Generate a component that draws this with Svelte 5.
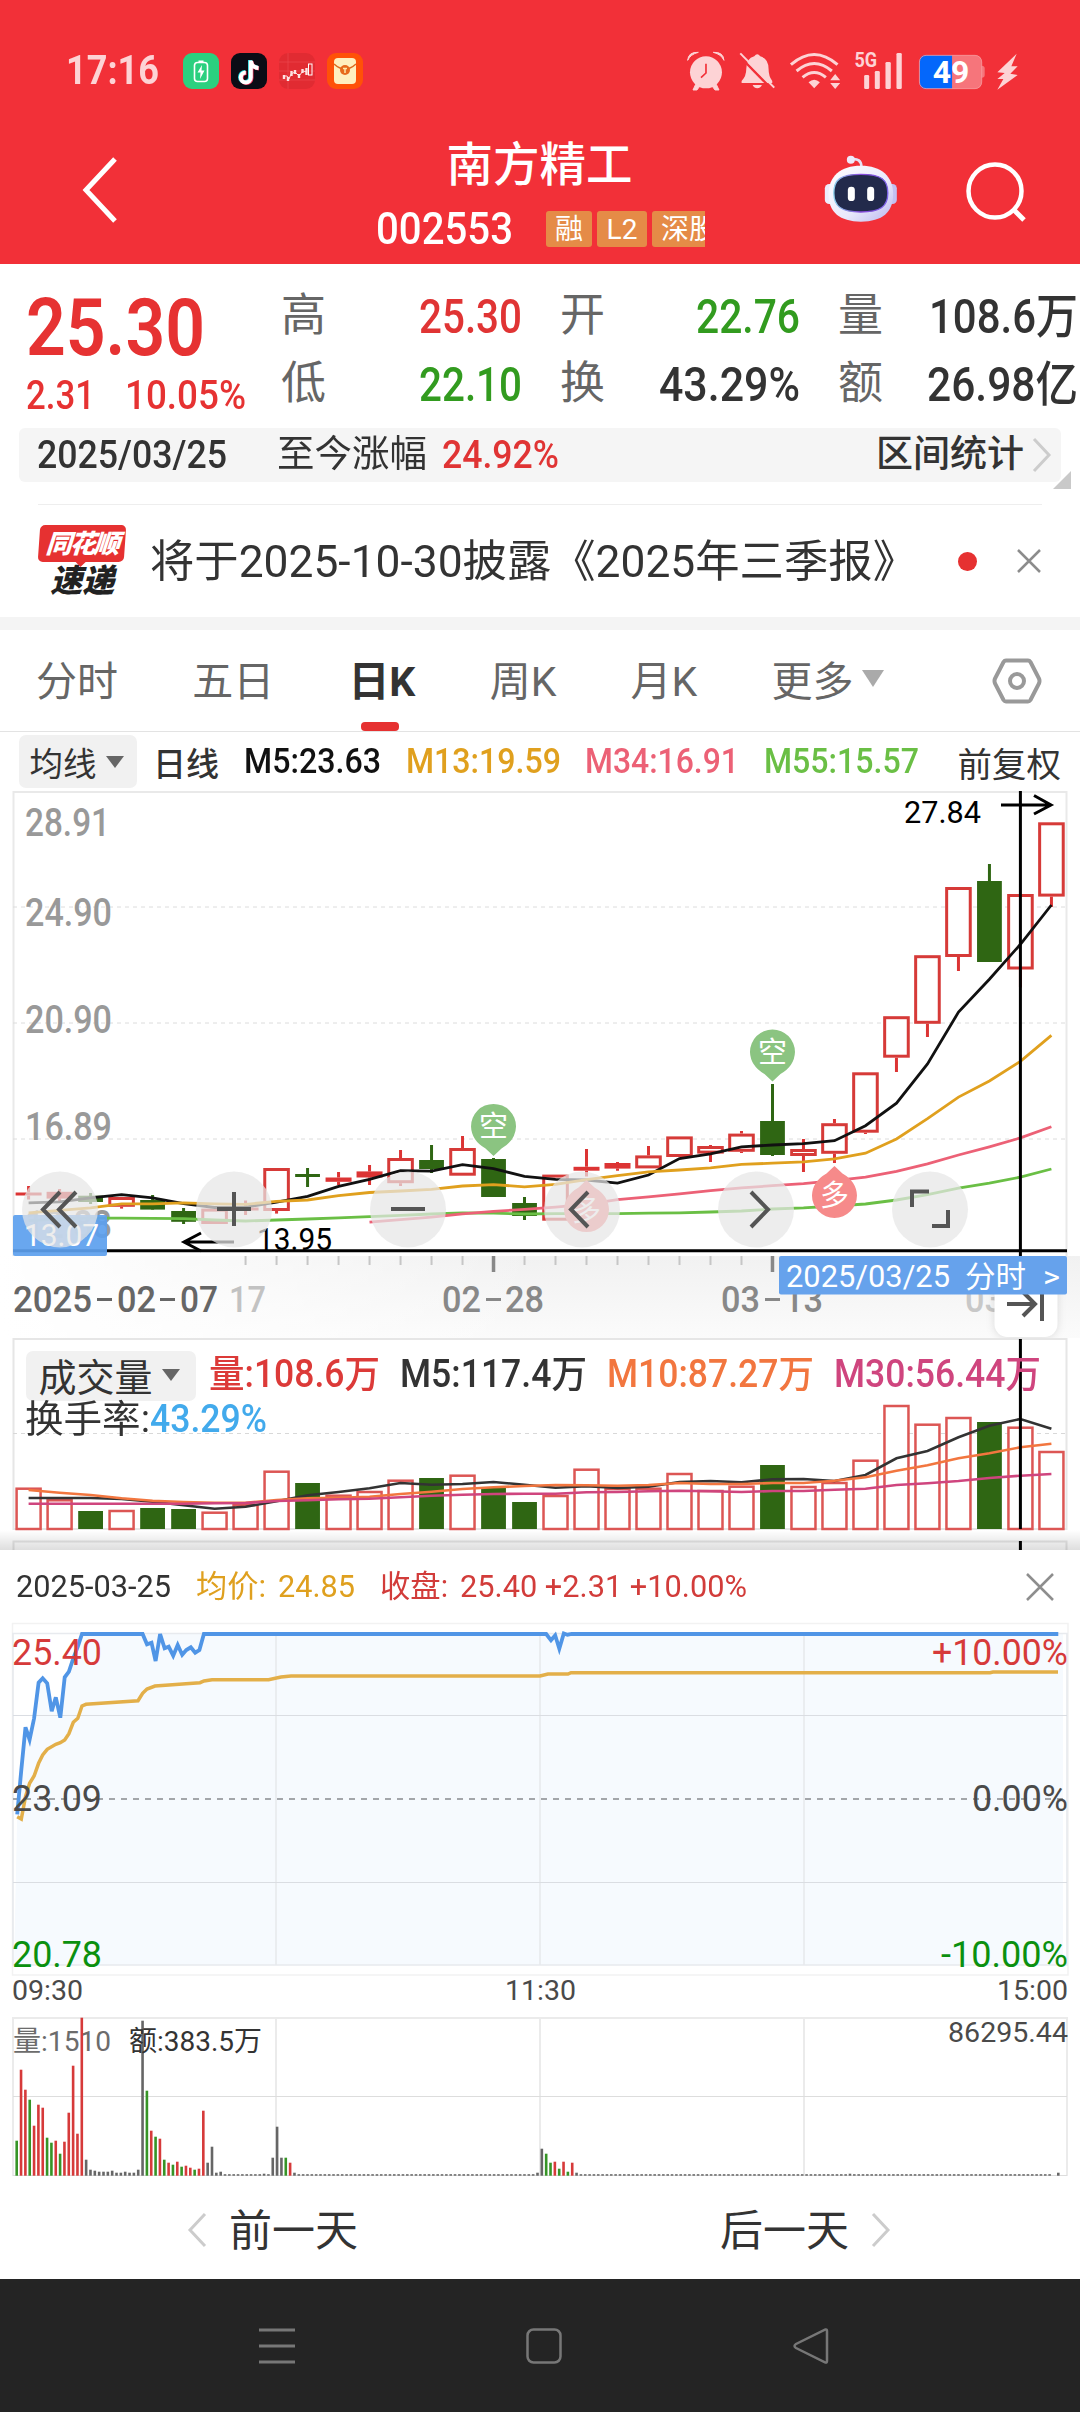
<script lang="ts">
	type Candle = [kind: 'up' | 'down', high: number, top: number, bottom: number, low: number];

	const tabs = ['分时', '五日', '日K', '周K', '月K', '更多'];
	let activeTab = $state('日K');

	const stats = [
		{ label: '高', value: '25.30', tone: 'rise', width: 103 },
		{ label: '开', value: '22.76', tone: 'fall', width: 104 },
		{ label: '量', value: '108.6万', tone: '', width: 149 },
		{ label: '低', value: '22.10', tone: 'fall', width: 103 },
		{ label: '换', value: '43.29%', tone: '', width: 141 },
		{ label: '额', value: '26.98亿', tone: '', width: 151 }
	];

	const averages = [
		{ text: 'M5:23.63', color: '#111', width: 137 },
		{ text: 'M13:19.59', color: '#e0a01e', width: 155 },
		{ text: 'M34:16.91', color: '#ec6176', width: 154 },
		{ text: 'M55:15.57', color: '#6abf45', width: 155 }
	];

	const volumeAverages = [
		{ text: '量:108.6万', color: '#dc3a38', width: 171 },
		{ text: 'M5:117.4万', color: '#333', width: 187 },
		{ text: 'M10:87.27万', color: '#f2763f', width: 207 },
		{ text: 'M30:56.44万', color: '#cf457e', width: 207 }
	];

	// y positions of each daily candle on the chart canvas
	const candles: Candle[] = [
		['up', 1186, 1192.5, 1195.5, 1199.6],
		['up', 1189, 1191.8, 1198.6, 1201.4],
		['down', 1193, 1195.7, 1202, 1204],
		['up', 1197, 1197, 1206.8, 1208.6],
		['down', 1195, 1200, 1209.6, 1209.6],
		['down', 1208, 1211, 1221.8, 1224],
		['up', 1208.6, 1208.6, 1224, 1224],
		['up', 1200.4, 1207.5, 1210.5, 1215],
		['up', 1168, 1168, 1211, 1213.6],
		['down', 1168, 1174, 1177, 1187],
		['up', 1172, 1177.5, 1181.8, 1185],
		['up', 1165, 1171.4, 1177.5, 1185],
		['up', 1150, 1158, 1183.2, 1186],
		['down', 1145, 1160, 1169, 1173],
		['up', 1136, 1148, 1175.7, 1175.7],
		['down', 1158, 1159, 1197, 1197],
		['down', 1197, 1203, 1216, 1220],
		['up', 1174.6, 1174.6, 1220.7, 1220.7],
		['up', 1149, 1166.8, 1170.7, 1176.4],
		['up', 1162, 1163, 1168.6, 1170.7],
		['up', 1146, 1155.4, 1168.4, 1168.4],
		['up', 1136.4, 1136.4, 1157, 1157],
		['up', 1145, 1146, 1153.6, 1162],
		['up', 1131, 1133.6, 1151.8, 1153],
		['down', 1084, 1121, 1155, 1156],
		['up', 1139, 1149, 1156, 1172],
		['up', 1119, 1123.2, 1153.8, 1163],
		['up', 1072.3, 1072.3, 1132.7, 1134],
		['up', 1016.2, 1016.2, 1057.7, 1072],
		['up', 955.2, 955.2, 1023.8, 1037],
		['up', 887, 887, 957, 971],
		['down', 864, 881, 962, 962],
		['up', 894, 894, 969.5, 987.5],
		['up', 822.3, 822.3, 896.6, 907]
	];

	const priceLines = [
		{ color: '#6abf45', start: 0, ys: [1220.7, 1219, 1218.2, 1218.2, 1218.4, 1218.6, 1220, 1221, 1220, 1219, 1217.9, 1216.6, 1215.4, 1214, 1213, 1213.2, 1214, 1213.6, 1213.6, 1213.6, 1213.2, 1212.9, 1212, 1211, 1209, 1207.9, 1206, 1204, 1200, 1194.6, 1188.2, 1183.2, 1177.1, 1169] },
		{ color: '#ec6176', start: 11, ys: [1222.1, 1219.6, 1217.1, 1213.9, 1211.4, 1209.3, 1207.1, 1204.3, 1199.6, 1196.8, 1193.9, 1190.7, 1187.9, 1185.7, 1183.6, 1180.7, 1177.1, 1171.4, 1163.9, 1155, 1146.8, 1137.9, 1126.8] },
		{ color: '#111', start: 0, ys: [1202.9, 1201.8, 1197.9, 1194.6, 1197.9, 1203.6, 1207.5, 1207.1, 1202.1, 1196.4, 1186.4, 1179.3, 1170.7, 1171.1, 1164.6, 1168.6, 1176.4, 1179.3, 1180, 1183.2, 1175, 1158.6, 1153.9, 1146.8, 1145, 1143.6, 1140.7, 1125.7, 1103.2, 1063.9, 1012.1, 979.3, 944.3, 905] },
		{ color: '#e0a01e', start: 0, ys: [1212.9, 1210.4, 1207.9, 1203.9, 1203.9, 1202.9, 1203.9, 1204.3, 1201.4, 1200, 1195.7, 1192.5, 1191, 1189.3, 1186, 1184.6, 1186.8, 1184.3, 1179.6, 1175.7, 1171.8, 1170, 1167.9, 1164.3, 1163.2, 1161.8, 1158.9, 1153.2, 1138.9, 1118.6, 1097.1, 1081, 1061.4, 1035.4] }
	];

	const volumeTops = [
		1487.7, 1499.3, 1511, 1510, 1508, 1509, 1511.7, 1504, 1470.7, 1483, 1494.7, 1491, 1479.7, 1478,
		1474.7, 1487, 1502, 1495, 1468.7, 1488, 1487.7, 1473, 1490, 1485.7, 1465, 1486, 1482, 1459.7,
		1405, 1423.7, 1417, 1422, 1426.7, 1451
	];

	const volumeLines = [
		{ color: '#333', ys: [1498, 1498, 1498, 1499, 1501.7, 1505.3, 1508.7, 1506.7, 1501.3, 1495.3, 1492, 1488.3, 1483, 1484.7, 1484, 1482, 1484.7, 1487.7, 1486.3, 1488, 1486.7, 1482, 1481, 1482.3, 1479.3, 1479, 1481, 1475, 1458.3, 1451, 1437.3, 1425.7, 1419, 1428.7] },
		{ color: '#f2763f', ys: [1490, 1492.7, 1495, 1498.3, 1500.7, 1502, 1502.7, 1502.7, 1500, 1498.3, 1497.7, 1496.7, 1494, 1491.7, 1489, 1487.3, 1486, 1485, 1485.3, 1485.7, 1485, 1483, 1484, 1484, 1483, 1483, 1480.7, 1477.3, 1470.7, 1465.3, 1458.3, 1453.3, 1447.3, 1443.7] },
		{ color: '#cf457e', ys: [1503.7, 1503.7, 1503.7, 1503.7, 1503.7, 1503.7, 1503.3, 1503, 1501, 1500.3, 1499.3, 1498.7, 1497.3, 1495.7, 1494.7, 1494, 1493.7, 1493.7, 1492.3, 1492, 1491.3, 1490.7, 1491.3, 1492, 1491, 1491, 1489.7, 1488.7, 1485, 1483.3, 1481, 1478, 1475.7, 1474] }
	];

	const pins = [
		{ index: 15, y: 1126.4, text: '空', up: false },
		{ index: 24, y: 1052, text: '空', up: false },
		{ index: 18, y: 1209.6, text: '多', up: true },
		{ index: 26, y: 1195.4, text: '多', up: true }
	];

	const priceLabels = [
		{ text: '28.91', y: 836, width: 83 },
		{ text: '24.90', y: 925.7, width: 85 },
		{ text: '20.90', y: 1033, width: 85 },
		{ text: '16.89', y: 1140, width: 85 },
		{ text: '12.88', y: 1238, width: 85 }
	];

	const controls = [
		'M60 1192L43 1209.5L60 1227M76 1192L59 1209.5L76 1227',
		'M234 1192V1226M217 1209H251',
		'M391 1209H425',
		'M588 1192L571 1209.5L588 1227',
		'M751 1192L768 1209.5L751 1227',
		'M912 1207V1191.5H929M932 1226H948V1210'
	];

	const intradayPrice =
		'17.2,1814.3 21.3,1770 25.5,1727.3 29.6,1739.7 34.1,1718.3 38.6,1682.7 42.7,1678.3 47.2,1683.3 51.7,1711.3 55.8,1697.3 60.3,1717.7 64.7,1677.3 68.9,1671.7 73.3,1658.3 77.8,1646.7 82,1634 142.6,1634 147,1644.3 151.5,1642.7 155.6,1661 160.1,1634 164.6,1648.3 168.7,1646.7 173.2,1655.7 177.7,1645 182.2,1654.7 186.3,1650 190.8,1647.3 195.2,1652.7 199.4,1650 203.9,1634 546.2,1634 551,1640.3 555.2,1635.3 559.3,1648.7 563.8,1633.5 567.5,1634.7 571.7,1634 1058.3,1634';
	const intradayAverage =
		'17.2,1816.7 21.3,1819 25.5,1796.7 29.6,1783.3 34.1,1776 38.6,1763.3 42.7,1755 47.2,1749.3 55.8,1744.3 60.3,1742.7 64.7,1740 68.9,1733.7 73.3,1722.3 77.8,1718.3 82,1706 86,1704.3 138,1700.7 142.6,1693.3 147,1689 155,1686 169,1685 186,1683.7 200,1682.7 204,1681 212,1679.7 268.6,1679.7 281,1677 291,1676 540,1676 548,1674 568,1674 571,1672.7 990,1672.7 993,1672 1058,1672';

	// per-minute volume, "minute + colour + height"; minutes left out are nearly flat
	const spikes =
		'0g35 1r106 2r86 3g76 4r50 5r71 6r68 7g38 8g33 9r35 10g22 11r34 12r63 13r110 14r42 15r158 16k16 17k6 18k5 19k4 20k4 21k4 22k5 23k3 24k3 25k4 26k3 27k3 28k6 29k155 30g85 31r45 32g39 33r37 34g16 35r13 36g11 37r14 38g9 39r10 40r8 41g6 42r7 43r65 44k13 45k29 46k3 47k4 57k2 59k18 60k49 61k18 62g18 63r13 64k3 120k3 121k27 122g22 123g13 124r14 125g7 126r14 127g4 128r13 129k3 192k2 239k0 240k3';
	const minuteColors: Record<string, string> = { r: '#d63a3a', g: '#369426', k: '#666' };
	const minutes = Array.from({ length: 241 }, () => ({ color: '#666', height: 1.5 }));
	for (const spike of spikes.split(' ')) {
		const [, minute, color, height] = spike.match(/(\d+)([rgk])(\d+)/) as RegExpMatchArray;
		minutes[+minute] = { color: minuteColors[color], height: +height };
	}

	const candleX = (index: number) => 28.6 + index * 30.995;

	const toPoints = (ys: number[], start = 0) =>
		ys.map((y, index) => `${candleX(index + start).toFixed(1)},${y}`).join(' ');

	// condense a label horizontally to the given width, like the narrow numeral face
	const fit = (node: HTMLElement, width: number) => {
		const natural = node.getBoundingClientRect().width;
		node.style.transform = `scaleX(${width / natural})`;
		node.style.marginRight = `${width - natural}px`;
	};
</script>

{#snippet label(text: string, x: number, y: number, width: number, size: number, color: string)}
	<text {x} {y} textLength={width} lengthAdjust="spacingAndGlyphs" font-size={size} fill={color}>{text}</text>
{/snippet}

<main>
	<header>
		<div class="status-bar">
			<span class="time" use:fit={93}>17:16</span>
			<div class="app-icons">
				<svg viewBox="0 0 36 36">
					<rect width="36" height="36" rx="9" fill="#2bd07f" />
					<rect x="11.5" y="9.5" width="13" height="19" rx="3" fill="none" stroke="#fff" stroke-width="1.6" />
					<path d="M15.500 7.500H20.500V9.500H15.500Z M19 12L14.500 19.500H17.500L17 26L21.500 17.500H18.500Z" fill="#fff" />
				</svg>
				<svg viewBox="0 0 36 36">
					<rect width="36" height="36" rx="9" fill="#0b0c15" />
					<g fill="none" stroke-width="4">
						<path d="M19 7V24A5 5 0 1 1 14 19M19 8Q20 14 26.500 14.500" stroke="#25d9e0" />
						<path d="M20.500 8V25A5 5 0 1 1 15.500 20M20.500 9Q21.500 15 28 15.500" stroke="#f0365e" />
						<path d="M19.800 7.500V24.500A5 5 0 1 1 14.800 19.500M19.800 8Q20.800 14.500 27.500 15" stroke="#fff" />
					</g>
				</svg>
				<svg viewBox="0 0 36 36">
					<rect width="36" height="36" rx="9" fill="#e12b32" />
					<path d="M0 9H36M0 18H36M0 27H36M9 0V36" stroke="#ed4b50" stroke-width=".6" />
					<path d="M5 22V26M9 24V28M12.500 18V23M16 17V21M20 21V25M23.500 16V20M27.500 15V22" fill="none" stroke="#fde2e2" stroke-width="2.400" />
					<path d="M4 23H8L10 26L12 21L16 19L20 23L24 18L28 19" fill="none" stroke="#fde2e2" />
					<rect x="29.500" y="11" width="3.500" height="11" fill="none" stroke="#fff" />
				</svg>
				<svg viewBox="0 0 36 36">
					<rect width="36" height="36" rx="9" fill="#ff5108" />
					<rect x="7" y="5" width="22" height="26" rx="4" fill="#ffefbf" />
					<path d="M7 11Q18 21 29 11" fill="none" stroke="#dd691e" stroke-width="1.500" />
					<circle cx="18" cy="17" r="5" fill="#e76a1c" />
					<path d="M16 15.500H20M18 15.500V20" stroke="#ffe7a8" stroke-width="1.500" />
				</svg>
			</div>
			<svg class="indicators" viewBox="50 60 1000 120" fill="#fdd3d5">
				<circle cx="107" cy="124" r="48" />
				<path d="M52 88Q54 62 84 64Q60 70 52 88ZM161 88Q159 62 129 64Q153 70 161 88ZM76 160L68 177H80L88 166ZM138 160L146 177H134L126 166Z" stroke="#fdd3d5" stroke-width="3" />
				<path d="M107 98V126L92 140" fill="none" stroke="#f23038" stroke-width="5" />
				<path d="M214 156V150Q228 136 228 114Q228 82 252 76Q261 64 270 76Q295 82 295 114Q295 136 306 150V156ZM247 162H275Q270 172 261 172Q252 172 247 162Z" />
				<path d="M204 72L306 176" stroke="#f23038" stroke-width="7" />
				<path d="M210 67L312 170" stroke="#fdd3d5" stroke-width="6" />
				<path d="M362 101Q432 40 502 101M379 120Q432 75 485 120M397 139Q432 110 467 139" fill="none" stroke="#fdd3d5" stroke-width="9" />
				<path d="M415 154Q432 138 449 154L432 172ZM480 148L495 129L510 148ZM480 156L495 174L510 156Z" />
				<rect x="582" y="132" width="15" height="42" rx="4" />
				<rect x="614" y="120" width="15" height="54" rx="4" />
				<rect x="646" y="93" width="16" height="81" rx="4" />
				<rect x="679" y="66" width="16" height="108" rx="4" />
				<text class="network" x="553" y="109" textLength="68" lengthAdjust="spacingAndGlyphs">5G</text>
				<path d="M845 73H915Q935 73 935 94V104Q944 104 944 112V132Q944 140 935 140V152Q935 173 915 173H845Z" fill="#f6757b" />
				<path d="M846 72H768Q748 72 748 94V152Q748 174 768 174H846Z" fill="#0467fb" />
				<rect x="748" y="73" width="187" height="100" rx="20" fill="none" stroke="#f79a9d" stroke-width="2.500" />
				<text class="battery" x="788" y="156" textLength="110" lengthAdjust="spacingAndGlyphs">49</text>
				<path d="M1040 68L982 124L1004 126L982 144H1000L982 176L1043 132L1021 128L1043 106H1024Z" />
			</svg>
		</div>

		<div class="app-bar">
			<svg class="back" viewBox="0 0 36 66"><path d="M33 2L4 33L33 64" fill="none" stroke="#fff" stroke-width="5" /></svg>
			<div class="stock">
				<h1>南方精工</h1>
				<div class="code-row">
					<span class="code" use:fit={137}>002553</span>
					<div class="tags">
						<span class="tag">融</span>
						<span class="tag wide">L2</span>
						<span class="tag cut">深股通</span>
					</div>
				</div>
			</div>
			<svg class="robot" viewBox="460 370 230 210">
				<defs>
					<linearGradient id="shell" x1="0" x2="1" y2="1">
						<stop offset="0" stop-color="#fff" />
						<stop offset=".6" stop-color="#e9e8fb" />
						<stop offset="1" stop-color="#b9b6ee" />
					</linearGradient>
					<linearGradient id="rim" x1="0" x2="1">
						<stop offset="0" stop-color="#8fd3ee" />
						<stop offset=".5" stop-color="#8748d8" />
						<stop offset="1" stop-color="#7b62e8" />
					</linearGradient>
				</defs>
				<path d="M544 389Q574 384 575 412" fill="none" stroke="#e6e0f5" stroke-width="8" />
				<circle cx="543" cy="390" r="12" fill="#eee9fa" />
				<rect x="465" y="463" width="30" height="60" rx="13" fill="#edecfc" />
				<rect x="651" y="463" width="30" height="60" rx="13" fill="#c3c0f2" />
				<path d="M573 408C635 408 670 440 670 494C670 548 638 576 573 576C510 576 476 548 476 494C476 440 512 408 573 408Z" fill="url(#shell)" />
				<path d="M573 434C635 434 654 450 654 490C654 530 632 547 573 547C514 547 492 530 492 490C492 450 512 434 573 434Z" fill="#222a4b" stroke="url(#rim)" stroke-width="4" />
				<rect x="534" y="471" width="21" height="43" rx="10" fill="#fff" />
				<rect x="592" y="471" width="21" height="43" rx="10" fill="#fff" />
			</svg>
			<svg class="search" viewBox="0 0 62 62">
				<circle cx="30" cy="29" r="26.500" fill="none" stroke="#fff" stroke-width="4.500" />
				<path d="M49 48L59 58" stroke="#fff" stroke-width="5" />
			</svg>
		</div>
	</header>

	<section class="quote">
		<div class="last">
			<strong class="price" use:fit={179}>25.30</strong>
			<div class="change">
				<span use:fit={69}>2.31</span>
				<span use:fit={121}>10.05%</span>
			</div>
		</div>
		<div class="stats">
			{#each stats as stat (stat.label)}
				<div class="stat">
					<span class="stat-label">{stat.label}</span>
					<span class={`stat-value ${stat.tone}`} use:fit={stat.width}>{stat.value}</span>
				</div>
			{/each}
		</div>
	</section>

	<section class="range">
		<span class="range-date" use:fit={190}>2025/03/25</span>
		<span class="range-name" use:fit={150}>至今涨幅</span>
		<span class="range-change" use:fit={117}>24.92%</span>
		<span class="range-link">区间统计</span>
		<svg class="chevron" viewBox="0 0 20 36"><path d="M2 2L17 18L2 34" fill="none" stroke="#ccc" stroke-width="3" /></svg>
		<i class="corner"></i>
	</section>

	<section class="news">
		<div class="news-logo">
			<span class="bubble">同花顺</span>
			<span class="express">速递</span>
		</div>
		<p><span use:fit={767}>将于2025-10-30披露《2025年三季报》</span></p>
		<i class="dot"></i>
		<svg class="close" viewBox="0 0 26 26"><path d="M2 2L24 24M24 2L2 24" stroke="#8c8c8c" stroke-width="2.500" /></svg>
	</section>

	<nav class="tabs">
		{#each tabs as tab (tab)}
			<button class:active={tab === activeTab} onclick={() => (activeTab = tab)}>
				{tab}{#if tab === '更多'}<i class="triangle"></i>{/if}
			</button>
		{/each}
		<svg class="settings" viewBox="0 0 50 46" fill="none" stroke="#999" stroke-width="4">
			<path d="M14 2.500H36Q37.500 2.500 38.500 4L47 20.500Q48 23 47 25.500L38.500 42Q37.500 43.500 36 43.500H14Q12.500 43.500 11.500 42L3 25.500Q2 23 3 20.500L11.500 4Q12.500 2.500 14 2.500Z" />
			<circle cx="25" cy="23" r="7" />
		</svg>
	</nav>

	<section class="averages">
		<button class="chip">均线<i class="triangle small"></i></button>
		<span class="period">日线</span>
		<div class="average-list">
			{#each averages as average (average.text)}
				<span style:color={average.color} use:fit={average.width}>{average.text}</span>
			{/each}
		</div>
		<span class="adjust">前复权</span>
	</section>

	<svg class="k-chart" viewBox="0 788 1080 550">
		<defs>
			<linearGradient id="axis" x1="0" x2="0" y1="0" y2="1">
				<stop offset="0" stop-color="#f1f1f1" />
				<stop offset="1" stop-color="#fbfbfb" />
			</linearGradient>
			<linearGradient id="axis-fade">
				<stop offset="0" stop-color="#fff" />
				<stop offset=".5" stop-color="#fff" stop-opacity="0" />
			</linearGradient>
		</defs>
		<rect x="0" y="1256" width="1080" height="82" fill="url(#axis)" />
		<rect x="0" y="1256" width="1080" height="82" fill="url(#axis-fade)" />
		<path d="M13.500 1256V792H1066.500V1256" fill="none" stroke="#e9e9e9" stroke-width="2" />
		<path d="M13 907H1067M13 1023H1067M13 1139H1067" stroke="#dcdcdc" stroke-dasharray="4 4" />
		<g class="prices">
			{#each priceLabels as item (item.text)}
				{@render label(item.text, 25, item.y, item.width + 2, 38, '#999')}
			{/each}
		</g>

		{#each candles as [kind, high, top, bottom, low], index (index)}
			{@const x = candleX(index)}
			{#if kind === 'down'}
				<path d={`M${x} ${high}V${low}`} stroke="#2f6613" stroke-width="3" />
				<rect x={x - 12.4} y={top} width="24.8" height={bottom - top} fill="#2f6613" />
			{:else}
				<path d={`M${x} ${high}V${top}M${x} ${bottom}V${low}`} stroke="#dc3434" stroke-width="3" />
				{#if bottom - top < 7}
					<rect x={x - 13} y={top} width="26" height={bottom - top} fill="#dc3434" />
				{:else}
					<rect x={x - 11.8} y={top + 1.5} width="23.600" height={bottom - top - 3} fill="#fff" stroke="#d63a38" stroke-width="3" />
				{/if}
			{/if}
		{/each}
		{#each priceLines as line (line.color)}
			<polyline points={toPoints(line.ys, line.start)} fill="none" stroke={line.color} stroke-width="2.800" />
		{/each}

		{#each pins as pin (pin.index)}
			<g transform={`translate(${candleX(pin.index)} ${pin.y})`}>
				<path
					d="M-22.500 0A22.500 22.500 0 1 1 22.500 0Q22 14 8 22L0 29.500L-8 22Q-22 14 -22.500 0Z"
					transform={pin.up ? 'scale(1 -1)' : undefined}
					fill={pin.up ? '#f68a8a' : '#8bc481'}
				/>
				<text class="pin" x="0" y="11">{pin.text}</text>
			</g>
		{/each}

		{@render label('27.84', 904, 823, 77, 30.5, '#000')}
		<path d="M1001 805H1051M1034 795.500L1051 805L1034 814" fill="none" stroke="#000" stroke-width="3" />
		{@render label('13.95', 257, 1250, 75, 30.5, '#000')}
		<path d="M234 1242H184M201 1233L184 1242L201 1251" fill="none" stroke="#000" stroke-width="3" />
		<path d="M13 1250.700H1067M1020.400 791V1256" stroke="#000" stroke-width="3" />
		<rect x="13" y="1215" width="94" height="41" rx="2" fill="#5c9fee" fill-opacity=".92" />
		{@render label('13.07', 24, 1246, 75, 30.5, '#fff')}

		{#each candles.slice(7) as _, offset (offset)}
			{@const major = offset === 8 || offset === 17}
			<path
				d={`M${candleX(offset + 7)} 1256V${major ? 1272 : 1265}`}
				stroke={major ? '#888' : '#c6c6c6'}
				stroke-width={major ? 3.5 : 2}
			/>
		{/each}
		<g class="dates">
			{@render label('2025', 13, 1312, 79, 37, '#666')}
			{@render label('02', 117, 1312, 39, 37, '#666')}
			{@render label('07', 180, 1312, 38, 37, '#666')}
			{@render label('17', 229, 1312, 37, 37, '#c2c2c2')}
			{@render label('02', 442, 1312, 39, 37, '#888')}
			{@render label('28', 505, 1312, 39, 37, '#888')}
			{@render label('03', 721, 1312, 39, 37, '#888')}
			{@render label('13', 784, 1312, 39, 37, '#888')}
			{@render label('03', 965, 1312, 39, 37, '#c8c8c8')}
		</g>
		<path d="M97 1299.500H112M160 1299.500H175" stroke="#666" stroke-width="3" />
		<path d="M486 1299.500H501M765 1299.500H780" stroke="#888" stroke-width="3" />

		<rect class="jump" x="994.500" y="1270" width="63" height="67" rx="13" fill="#fff" />
		<path d="M1007 1304H1034M1023 1292L1035 1304L1023 1316M1042 1287V1321" fill="none" stroke="#555" stroke-width="4" />
		<rect x="779" y="1256" width="288" height="38.500" rx="2" fill="#66a2ec" />
		{@render label('2025/03/25', 786, 1287, 164, 30.5, '#fff')}
		{@render label('分时', 965, 1287, 61, 30, '#fff')}
		{@render label('>', 1043, 1287, 17, 30, '#fff')}

		{#each controls as icon, index (icon)}
			<circle cx={60 + index * 174} cy="1209.500" r="38" fill="#e6e6e6" fill-opacity=".72" />
			<path d={icon} fill="none" stroke="#555" stroke-width="4" />
		{/each}
	</svg>

	<section class="volume">
		<div class="volume-head">
			<button class="chip">成交量<i class="triangle small"></i></button>
			{#each volumeAverages as average (average.text)}
				<span style:color={average.color} use:fit={average.width}>{average.text}</span>
			{/each}
		</div>
		<p class="turnover">
			<span use:fit={125}>换手率:</span><span class="turnover-value" use:fit={117}>43.29%</span>
		</p>
		<svg class="volume-chart" viewBox="0 1338 1080 212">
			<defs>
				<linearGradient id="edge" x1="0" x2="0" y1="0" y2="1">
					<stop offset="0" stop-color="#000" stop-opacity="0" />
					<stop offset="1" stop-color="#000" stop-opacity=".13" />
				</linearGradient>
			</defs>
			<path d="M13.500 1339V1529H1066.500V1339ZM13.500 1550V1541.500H1066.500V1550" fill="none" stroke="#e6e6e6" stroke-width="2" />
			<path d="M13 1433.500H1067" stroke="#d8d8d8" stroke-dasharray="4 4" />
			{#each volumeTops as top, index (index)}
				{@const x = candleX(index)}
				{#if candles[index][0] === 'down'}
					<rect x={x - 12.4} y={top} width="24.800" height={1529 - top} fill="#2f6613" />
				{:else}
					<rect x={x - 12} y={top + 1} width="24" height={1528 - top} fill="#fff" stroke="#dc5654" stroke-width="2.500" />
				{/if}
			{/each}
			{#each volumeLines as line (line.color)}
				<polyline points={toPoints(line.ys)} fill="none" stroke={line.color} stroke-width="2.600" />
			{/each}
			<path d="M1020.400 1339V1529M1020.400 1541V1550" stroke="#000" stroke-width="3" />
			<rect x="0" y="1530" width="1080" height="20" fill="url(#edge)" />
		</svg>
	</section>

	<section class="sheet">
		<div class="sheet-head">
			<span class="sheet-date" use:fit={155}>2025-03-25</span>
			<span class="gold" use:fit={70}>均价:</span>
			<span class="gold value" use:fit={77}>24.85</span>
			<span class="red" use:fit={68}>收盘:</span>
			<span class="red value" use:fit={287}>25.40 +2.31 +10.00%</span>
			<svg class="sheet-close" viewBox="0 0 28 28"><path d="M1 1L27 27M27 1L1 27" stroke="#8e8e8e" stroke-width="2.500" /></svg>
		</div>
		<svg class="intraday" viewBox="0 1620 1080 392">
			<path d="M12.500 1623.500H1068V1975H12.500Z" fill="none" stroke="#f2f2f2" stroke-width="1.500" />
			<rect x="82" y="1633" width="981" height="332" fill="#f6fafe" />
			<polygon points={`14,1965 ${intradayPrice.split(' ').slice(0, 16).join(' ')} 82,1965`} fill="#f6fafe" />
			<path d="M13 1633.500H1067V1965H13ZM276 1634V1965M540 1634V1965M804 1634V1965" fill="none" stroke="#e8eaee" stroke-width="1.700" />
			<path d="M13 1715.500H1067M13 1882.500H1067" stroke="#dadde2" />
			<path d="M13 1799H1063" stroke="#a3a6aa" stroke-width="2" stroke-dasharray="6 6" />
			<polyline points={intradayAverage} fill="none" stroke="#e3af49" stroke-width="3.500" />
			<polyline points={intradayPrice} fill="none" stroke="#5095e6" stroke-width="3.800" />
			{@render label('25.40', 12, 1665, 90, 37, '#d63a3a')}
			{@render label('23.09', 12, 1811, 90, 37, '#4a4a4a')}
			{@render label('20.78', 12, 1967, 90, 37, '#0b900f')}
			{@render label('+10.00%', 932, 1665, 136, 37, '#d63a3a')}
			{@render label('0.00%', 972, 1811, 96, 37, '#4a4a4a')}
			{@render label('-10.00%', 941, 1967, 127, 37, '#0b900f')}
			{@render label('09:30', 12, 2000, 71, 28.5, '#4a4a4a')}
			{@render label('11:30', 505, 2000, 71, 28.5, '#4a4a4a')}
			{@render label('15:00', 997, 2000, 71, 28.5, '#4a4a4a')}
		</svg>
		<svg class="minute-chart" viewBox="0 2012 1080 168">
			<path d="M13 2176V2018H1067V2176M276 2018V2176M540 2018V2176M804 2018V2176" fill="none" stroke="#ebebeb" stroke-width="2" />
			<path d="M13 2096.500H1067M13 2175.500H1067" stroke="#ddd" />
			{@render label('量:1510', 13, 2051, 98, 28.5, '#6c6c6c')}
			{#each minutes as minute, index (index)}
				<rect x={15.4 + index * 4.34} y={2175.7 - minute.height} width="2.600" height={minute.height} fill={minute.color} />
			{/each}
			{@render label('额:383.5万', 129, 2051, 133, 28.5, '#333')}
			{@render label('86295.44', 948, 2042, 120, 28.5, '#4a4a4a')}
		</svg>
		<div class="days">
			<button class="previous">
				<svg class="chevron" viewBox="0 0 20 36"><path d="M18 2L3 18L18 34" fill="none" stroke="#ccc" stroke-width="3" /></svg>
				<span>前一天</span>
			</button>
			<button class="next">
				<span>后一天</span>
				<svg class="chevron" viewBox="0 0 20 36"><path d="M2 2L17 18L2 34" fill="none" stroke="#ccc" stroke-width="3" /></svg>
			</button>
		</div>
	</section>

	<footer>
		<svg viewBox="0 0 38 38"><path d="M1 3H37M1 19H37M1 35H37" stroke="#777" stroke-width="3" /></svg>
		<svg viewBox="0 0 38 38"><rect x="2.500" y="2.500" width="33" height="33" rx="6" fill="none" stroke="#777" stroke-width="2.500" /></svg>
		<svg viewBox="0 0 38 38"><path d="M33.500 2.500Q35 2 35 4V34Q35 36 33.500 35.500L4 21Q1 19 4 17Z" fill="none" stroke="#777" stroke-width="2.500" /></svg>
	</footer>
</main>

<style>
	:global(body) {
		margin: 0;
	}

	main {
		width: 1080px;
		height: 2412px;
		overflow: hidden;
		display: flex;
		flex-direction: column;
		background: #fff;
		color: #333;
		font-family: Roboto, 'Noto Sans CJK SC', sans-serif;
	}

	svg {
		display: block;
		flex: none;
	}

	span {
		display: inline-block;
		flex: none;
		white-space: nowrap;
		transform-origin: left center;
	}

	button {
		display: flex;
		align-items: center;
		padding: 0;
		border: 0;
		background: none;
		color: inherit;
		font: inherit;
		white-space: nowrap;
	}

	header {
		height: 264px;
		background: #f23038;
		color: #fff;
	}

	.status-bar {
		display: flex;
		align-items: center;
		height: 142px;
		padding-left: 66px;
	}

	.time {
		color: #fdd3d5;
		font-size: 41px;
		font-weight: 700;
		line-height: 46px;
		padding-bottom: 2px;
	}

	.app-icons {
		display: flex;
		gap: 12px;
		margin-left: 24px;
	}

	.app-icons svg {
		width: 36px;
		height: 36px;
	}

	.indicators {
		width: 333px;
		height: 40px;
		margin-left: 324px;
	}

	.network {
		font-size: 60px;
		font-weight: 700;
	}

	.battery {
		fill: #fff;
		font-size: 92px;
		font-weight: 700;
	}

	.app-bar {
		display: flex;
		align-items: flex-start;
		height: 122px;
		padding-left: 82px;
	}

	.back {
		width: 36px;
		height: 66px;
		margin-top: 15px;
	}

	.stock {
		width: 329px;
		margin-left: 258px;
	}

	h1 {
		margin: 0;
		height: 68px;
		padding-right: 2px;
		font-size: 46.500px;
		font-weight: 500;
		line-height: 46px;
		text-align: center;
	}

	.code-row {
		display: flex;
		align-items: center;
		height: 37px;
	}

	.code {
		font-size: 44px;
		font-weight: 500;
	}

	.tags {
		display: flex;
		gap: 5px;
		width: 159px;
		margin-left: 33px;
		overflow: hidden;
	}

	.tag {
		width: 46px;
		height: 36px;
		border-radius: 3px;
		background: #e58b47;
		font-size: 28px;
		line-height: 38px;
		text-align: center;
	}

	.tag.wide {
		width: 50px;
	}

	.tag.cut {
		width: 92px;
		padding-left: 9px;
		text-align: left;
	}

	.robot {
		width: 77px;
		height: 70px;
		margin: 11px 0 0 118px;
	}

	.search {
		width: 62px;
		height: 62px;
		margin: 20px 0 0 65px;
	}

	.quote {
		display: flex;
		height: 146px;
		padding-top: 18px;
	}

	.last {
		width: 255px;
		padding-left: 26px;
		color: #e63232;
	}

	.price {
		display: inline-block;
		font-size: 80px;
		font-weight: 600;
		line-height: 92px;
		transform-origin: left center;
	}

	.change {
		display: flex;
		gap: 30px;
		font-size: 41px;
		font-weight: 500;
		line-height: 42px;
	}

	.stats {
		display: grid;
		grid-template-columns: 241px 240px 240px;
		grid-template-rows: 68px 68px;
		column-gap: 38px;
	}

	.stat {
		display: flex;
		align-items: center;
		justify-content: space-between;
	}

	.stat-label {
		color: #666;
		font-size: 45px;
		line-height: 70px;
	}

	.stat-value {
		font-size: 48px;
		font-weight: 500;
		line-height: 69px;
	}

	.rise,
	.range-change {
		color: #e03434;
	}

	.fall {
		color: #329b1f;
	}

	.range {
		position: relative;
		display: flex;
		align-items: center;
		height: 54px;
		margin: 0 19px;
		padding: 0 9px 0 18px;
		border-radius: 6px;
		background: #f5f5f5;
		font-size: 38px;
		line-height: 54px;
	}

	.range-date,
	.range-change {
		font-weight: 500;
	}

	.range-name {
		margin-left: 50px;
		font-size: 37px;
	}

	.range-change {
		margin-left: 15px;
	}

	.range-link {
		margin-left: auto;
		font-size: 37px;
		font-weight: 500;
		line-height: 56px;
	}

	.chevron {
		width: 20px;
		height: 36px;
	}

	.range .chevron {
		margin-left: 8px;
	}

	.corner {
		position: absolute;
		right: -10px;
		bottom: -7px;
		border: 9px solid;
		border-color: transparent #c9c9c9 #c9c9c9 transparent;
	}

	.news {
		display: flex;
		align-items: center;
		height: 112px;
		margin: 22px 38px 0;
		border-top: 1px solid #eee;
	}

	.news-logo {
		display: flex;
		flex-direction: column;
		align-items: center;
		width: 90px;
		font-weight: 900;
	}

	.bubble {
		width: 86px;
		height: 37px;
		border-radius: 5px;
		background: #e63131;
		color: #fff;
		font-size: 26px;
		font-style: italic;
		line-height: 38px;
		letter-spacing: -2px;
		text-align: center;
		transform: skewX(-4deg);
	}

	.bubble::after {
		content: '';
		position: absolute;
		left: 37px;
		top: 36px;
		border: 6px solid transparent;
		border-top-color: #e63131;
	}

	.express {
		height: 35px;
		color: #222;
		font-size: 32px;
		font-style: italic;
		line-height: 38px;
	}

	.news p {
		width: 760px;
		margin: 0 0 0 24px;
		font-size: 44.500px;
		line-height: 70px;
		padding-top: 2px;
	}

	.dot {
		width: 19px;
		height: 19px;
		margin-left: 48px;
		border-radius: 50%;
		background: #e63131;
	}

	.close {
		width: 26px;
		height: 26px;
		margin-left: 39px;
	}

	.tabs {
		display: flex;
		align-items: center;
		height: 101px;
		padding-left: 36px;
		border-top: 13px solid #f4f4f4;
		border-bottom: 1px solid #e3e3e3;
		color: #666;
		font-size: 41px;
	}

	.tabs button {
		position: relative;
		height: 101px;
		margin-right: 74.200px;
		padding-bottom: 5px;
		box-sizing: border-box;
	}

	.tabs .active {
		color: #333;
		font-weight: 700;
	}

	.tabs .active::after {
		content: '';
		position: absolute;
		left: 50%;
		bottom: 0;
		width: 38px;
		height: 9px;
		margin-left: -21px;
		border-radius: 4px;
		background: #e63131;
	}

	.triangle {
		margin-left: 9px;
		border: 11px solid transparent;
		border-top: 17px solid #aaa;
		border-bottom: 0;
	}

	.triangle.small {
		border-width: 12px 9.500px 0;
		border-top-color: #666;
	}

	.settings {
		width: 50px;
		height: 46px;
		margin-left: 33px;
	}

	.averages {
		display: flex;
		align-items: center;
		height: 56px;
		padding: 3px 19px 0 19px;
		box-sizing: border-box;
		font-size: 35px;
	}

	.chip {
		justify-content: center;
		border-radius: 7px;
		background: #f1f1f1;
	}

	.averages .chip {
		width: 118px;
		height: 53px;
		margin-right: 16px;
		padding-right: 3px;
		font-size: 33.500px;
	}

	.period {
		margin-right: 25px;
		font-size: 33px;
		font-weight: 500;
	}

	.average-list {
		display: flex;
		gap: 24.500px;
		font-weight: 500;
	}

	.adjust {
		margin-left: auto;
		font-size: 34.500px;
	}

	.k-chart {
		width: 1080px;
		height: 550px;
	}

	.prices,
	.dates {
		font-weight: 500;
	}

	.pin {
		fill: #fff;
		font-size: 29px;
		text-anchor: middle;
	}

	.jump {
		filter: drop-shadow(0 1px 4px rgb(0 0 0 / 12%));
	}

	.volume {
		position: relative;
		z-index: 0;
		height: 212px;
		font-size: 38px;
	}

	.volume-head {
		display: flex;
		align-items: center;
		gap: 20px;
		height: 50px;
		padding: 13px 0 0 26px;
		font-weight: 500;
	}

	.volume-head span {
		height: 50px;
		line-height: 46px;
	}

	.volume-head .chip {
		width: 170px;
		height: 50px;
		margin-right: -7px;
		padding: 0 4px 3px 0;
		box-sizing: border-box;
		font-weight: 400;
	}

	.turnover {
		margin: 0;
		padding-left: 25px;
		line-height: 36px;
	}

	.turnover-value {
		color: #42aaec;
		font-weight: 500;
	}

	.volume-chart {
		position: absolute;
		inset: 0;
		z-index: -1;
		width: 1080px;
		height: 212px;
	}

	.sheet {
		height: 729px;
	}

	.sheet-head {
		display: flex;
		align-items: center;
		height: 70px;
		padding: 3px 26px 0 16px;
		box-sizing: border-box;
		font-size: 31px;
		line-height: 48px;
	}

	.gold {
		margin-left: 25px;
		color: #dfa01f;
	}

	.red {
		margin-left: 25px;
		color: #d23c3a;
	}

	.sheet-head .value {
		margin-left: 12px;
	}

	.sheet-close {
		width: 28px;
		height: 28px;
		margin-left: auto;
	}

	.intraday {
		width: 1080px;
		height: 392px;
	}

	.minute-chart {
		width: 1080px;
		height: 168px;
	}

	.days {
		display: flex;
		height: 99px;
		font-size: 43px;
	}

	.days button {
		gap: 22px;
		width: 50%;
	}

	.days span {
		padding-bottom: 5px;
	}

	.previous {
		padding-left: 187px;
	}

	.next {
		padding-left: 180px;
	}

	footer {
		display: flex;
		align-items: center;
		justify-content: space-between;
		height: 133px;
		padding: 0 250px 0 258px;
		background: #242424;
	}

	footer svg {
		width: 38px;
		height: 38px;
	}
</style>
